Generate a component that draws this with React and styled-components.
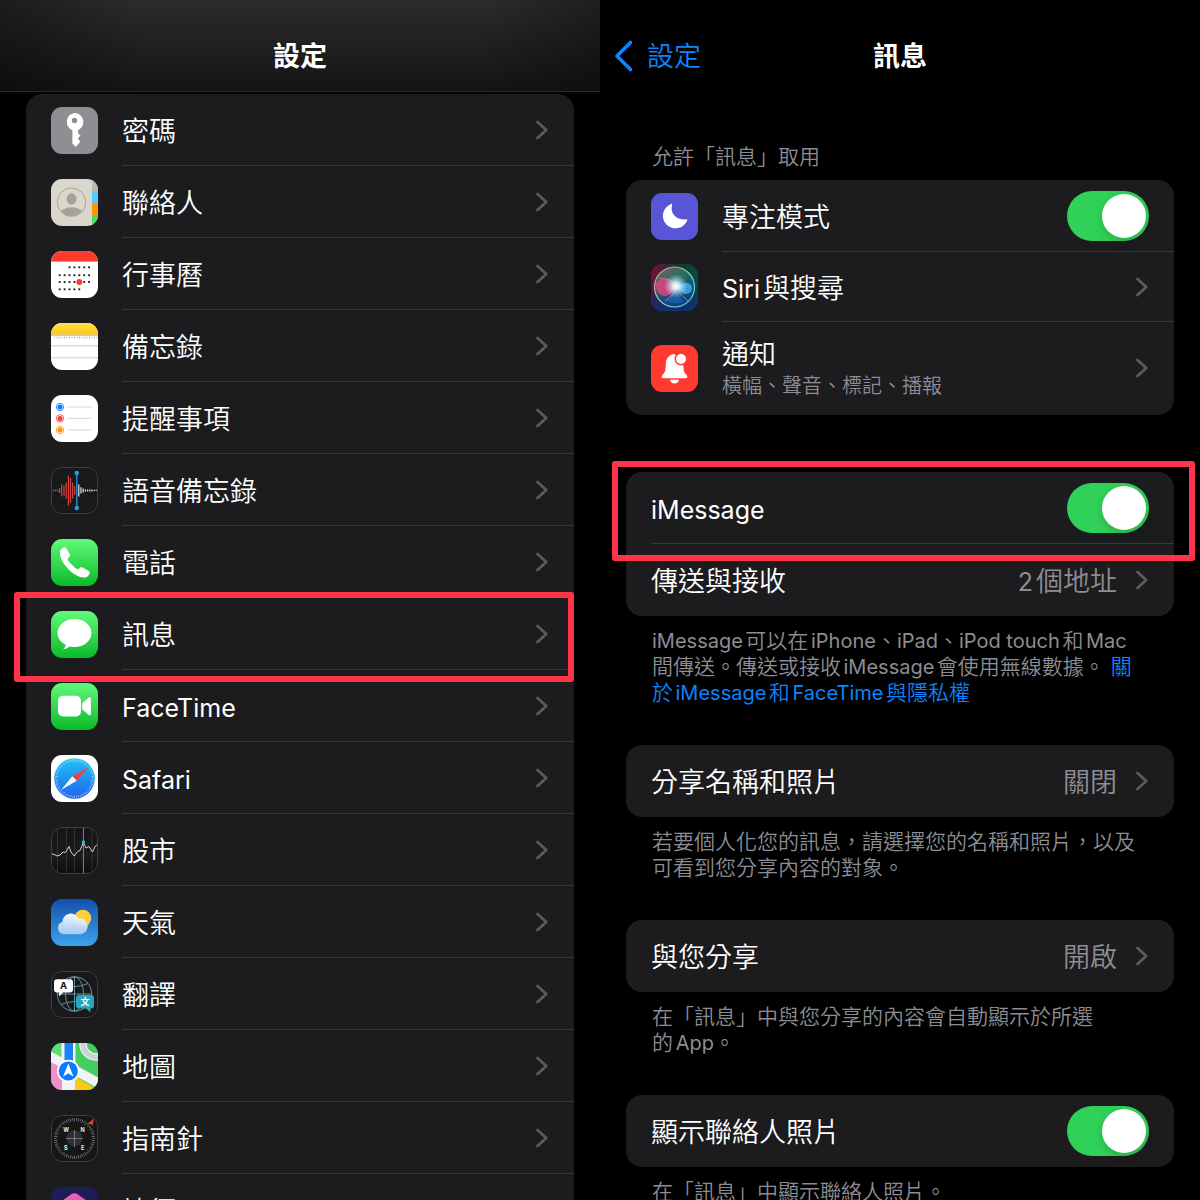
import React, { useState } from "react";
import styled, { createGlobalStyle, css } from "styled-components";

const GlobalStyle = createGlobalStyle`
  * { box-sizing: border-box; }
  body {
    margin: 0;
    background: #000;
    color: #fff;
    font-family: "Inter", "Noto Sans CJK TC", sans-serif;
    font-size: 27px;
    font-weight: 350;
    line-height: 32px;
    text-autospace: normal;
  }
  a { color: inherit; text-decoration: none; }
`;

/* ---------- layout ---------- */

const Screens = styled.div`
  display: flex;
  height: 100vh;
  overflow: hidden;
`;

const Screen = styled.main`
  flex: 1;
  min-width: 0;
`;

const NavBar = styled.header`
  display: grid;
  grid-template-columns: 1fr auto 1fr;
  align-items: center;
  height: 92px;
  padding: 22px 14px 0;
  border-bottom: 1px solid transparent;
  ${(p) =>
    p.$raised &&
    css`
      border-bottom-color: #2b2b2d;
      background:
        linear-gradient(90deg, rgba(0, 0, 0, 0.35), transparent 24%, transparent 80%, rgba(0, 0, 0, 0.3)),
        linear-gradient(#2c2c2d, #141414);
    `}
`;

const Title = styled.h1`
  grid-column: 2;
  margin: 0;
  font-size: 27px;
  font-weight: 700;
`;

const BackLink = styled.a`
  display: flex;
  align-items: center;
  gap: 13px;
  color: #0a84ff;
`;

const Content = styled.div`
  padding: ${(p) => (p.$top ? p.$top : 2)}px 26px 0;
`;

const Group = styled.section`
  margin-bottom: ${(p) => (p.$wide ? 57 : 39)}px;
`;

const GroupTitle = styled.h2`
  margin: 0;
  padding: 0 26px 10px;
  color: #8d8d93;
  font-size: 21px;
  font-weight: inherit;
  line-height: 26px;
`;

const Card = styled.div`
  border-radius: 16px;
  background: #1c1c1e;
`;

const GroupNote = styled.p`
  margin: 0;
  padding: 12px 26px 0;
  color: #8d8d93;
  font-size: 21px;
  line-height: 26px;
  white-space: nowrap;
`;

const NoteLink = styled.a`
  && { color: #0a84ff; }
`;

/* ---------- rows ---------- */

const rowStyle = css`
  position: relative;
  display: flex;
  align-items: center;
  gap: 24px;
  height: ${(p) => (p.$tall ? 93 : p.$short ? 70 : 72)}px;
  padding-left: 25px;
`;

const LinkRow = styled.a`${rowStyle}`;
const SwitchRow = styled.label`${rowStyle}`;

const RowBody = styled.span`
  display: flex;
  flex: 1;
  align-items: center;
  align-self: stretch;
  min-width: 0;
  padding: 4px 25px 0 0;
  border-bottom: 1px solid ${(p) => (p.$last ? "transparent" : "#38383a")};
`;

const Label = styled.span`
  flex: 1;
  min-width: 0;
  white-space: nowrap;
`;

const Detail = styled.span`
  display: block;
  color: #8d8d93;
  font-size: 20px;
  line-height: 30px;
`;

const Value = styled.span`
  margin-right: 18px;
  color: #8d8d93;
`;

const Latin = styled.span`
  font-size: ${(p) => (p.$small ? 20 : 25)}px;
  font-weight: 400;
`;

const Highlight = styled.span`
  position: absolute;
  z-index: 1;
  inset: ${(p) => p.$inset};
  border: 6px solid #ff344b;
  border-radius: 3px;
  pointer-events: none;
`;

const Switch = styled.input`
  appearance: none;
  flex: none;
  width: 82px;
  height: 50px;
  margin: 0 0 4px;
  padding: 3px;
  border-radius: 25px;
  background: #39393d;
  cursor: pointer;

  &::before {
    content: "";
    display: block;
    width: 44px;
    height: 44px;
    border-radius: 50%;
    background: #fff;
    box-shadow: 0 3px 8px rgba(0, 0, 0, 0.18);
  }
  &:checked { background: #30d158; }
  &:checked::before { margin-left: auto; }
`;

const ChevronSvg = styled.svg`
  flex: none;
  width: 14px;
  height: 22px;
  margin-bottom: 4px;
`;

const BackSvg = styled.svg`
  width: 20px;
  height: 32px;
  margin-bottom: 2px;
`;

const Tile = styled.svg`
  flex: none;
  width: 47px;
  height: 47px;
  border-radius: 11px;
  overflow: hidden;
`;

const Chevron = () => (
  <ChevronSvg viewBox="0 0 14 22" aria-hidden="true">
    <path d="M2.5 3l8.7 8-8.7 8" fill="none" stroke="#5c5c60" strokeWidth="2.8" strokeLinecap="round" strokeLinejoin="round" />
  </ChevronSvg>
);

/* Latin runs are set a little smaller than the Chinese text around them. */
const Mixed = ({ text, small }) =>
  text.split(/([A-Za-z0-9][A-Za-z0-9 ]*)/).map((part, i) =>
    i % 2 ? <Latin key={i} $small={small}>{part}</Latin> : part
  );

/* ---------- icons ---------- */

const Frame = () => <rect x=".5" y=".5" width="46" height="46" rx="10.5" fill="none" stroke="#3e3e41" />;

const Green = ({ id }) => (
  <>
    <linearGradient id={id} x2="0" y2="1">
      <stop stopColor="#61f97b" />
      <stop offset="1" stopColor="#0abb28" />
    </linearGradient>
    <rect width="47" height="47" fill={`url(#${id})`} />
  </>
);

const tickMarks = (count, r1, r2) =>
  Array.from({ length: count }, (_, i) => {
    const a = (i * 2 * Math.PI) / count;
    const long = i % 2 ? r1 + 1 : r1;
    return `M${23.5 + long * Math.sin(a)} ${23.5 - long * Math.cos(a)}L${23.5 + r2 * Math.sin(a)} ${23.5 - r2 * Math.cos(a)}`;
  }).join("");

const calendarDots = [
  [16.3, 2, 6],
  [24.2, 0, 6],
  [31, 0, 6],
  [38.3, 0, 4],
].flatMap(([y, from, to]) =>
  Array.from({ length: to - from + 1 }, (_, i) => [8.7 + (from + i) * 4.9, y])
);

const redBars = [[2.5, 1], [4.6, 1], [6.7, 1], [8.7, 2.5], [10.7, 6], [13, 5], [15.2, 8], [17.4, 15], [19.5, 12.5], [21.6, 8], [23.7, 4.5]];
const whiteBars = [[27.8, 6], [30, 3.2], [32.2, 2], [34.4, 1], [36.6, 1], [38.8, 1], [41, 1], [43.2, 0.7], [45.2, 0.7]];

const icons = {
  passwords: (
    <>
      <rect width="47" height="47" fill="#8e8e93" />
      <path fill="#fff" fillRule="evenodd" d="M23.5 6a9 9 0 0 1 3.6 17.2v3l2.2 2.2-2.4 3 2.4 3.3-4.500 5.300-3.400-3.500V23.200A9 9 0 0 1 23.500 6zm0 4.700a2.700 2.700 0 1 0 0 5.400 2.700 2.700 0 0 0 0-5.400z" />
    </>
  ),
  contacts: (
    <>
      <rect width="47" height="47" fill="#d9d6cc" />
      <rect x="41" width="6" height="12" fill="#b9b8b2" />
      <rect x="41" y="12" width="6" height="12" fill="#5ac8fa" />
      <rect x="41" y="24" width="6" height="12" fill="#ff9500" />
      <rect x="41" y="36" width="6" height="11" fill="#4cd964" />
      <clipPath id="face"><circle cx="20.5" cy="23.2" r="14" /></clipPath>
      <g fill="#a8a09a" clipPath="url(#face)">
        <ellipse cx="20.5" cy="20" rx="5" ry="5.8" />
        <ellipse cx="20.5" cy="36" rx="12" ry="7.7" />
      </g>
      <circle cx="20.5" cy="23.2" r="14.2" fill="none" stroke="#a8a09a" strokeWidth="1" />
    </>
  ),
  calendar: (
    <>
      <rect width="47" height="47" fill="#fff" />
      <rect width="47" height="10.6" fill="#ff3b30" />
      {calendarDots.map(([x, y]) => <rect key={`${x}-${y}`} x={x - 0.9} y={y - 0.9} width="1.8" height="1.8" fill="#111" />)}
      <circle cx="28.3" cy="31" r="3" fill="#ff3b30" />
    </>
  ),
  notes: (
    <>
      <linearGradient id="notesTop" x2="0" y2="1"><stop stopColor="#ffdf5e" /><stop offset="1" stopColor="#fdc800" /></linearGradient>
      <rect width="47" height="47" fill="#fff" />
      <rect width="47" height="11.6" fill="url(#notesTop)" />
      <path d="M0 12.2h47" stroke="#b9b5a4" />
      <path d="M3 14.5h44" stroke="#aaa" strokeWidth="1.5" strokeDasharray="1 1.5" />
      <path d="M0 22.8h47M0 34.8h47" stroke="#c4c4c6" strokeWidth=".9" />
    </>
  ),
  reminders: (
    <>
      <rect width="47" height="47" fill="#fff" />
      {[[12, "#0a7bff"], [23.4, "#ff3b30"], [35, "#ff9500"]].map(([y, c]) => (
        <g key={y}>
          <circle cx="9" cy={y} r="2.5" fill={c} />
          <circle cx="9" cy={y} r="3.7" fill="none" stroke={c} strokeWidth=".8" />
          <path d={`M17 ${y}h24`} stroke="#d2d2d4" strokeWidth=".9" />
        </g>
      ))}
    </>
  ),
  voice: (
    <>
      <rect width="47" height="47" fill="#19191b" />
      <Frame />
      {redBars.map(([x, h]) => <path key={x} d={`M${x} ${23.4 - h}v${h * 2}`} stroke="#d2433e" strokeWidth="1.2" />)}
      {whiteBars.map(([x, h]) => <path key={x} d={`M${x} ${23.4 - h}v${h * 2}`} stroke="#e6e6e6" strokeWidth="1.2" />)}
      <path d="M25.8 6v35" stroke="#1fa1ee" strokeWidth="1.2" />
      <circle cx="25.8" cy="6" r="2.2" fill="#1fa1ee" />
      <circle cx="25.8" cy="41" r="2.2" fill="#1fa1ee" />
    </>
  ),
  phone: (
    <>
      <Green id="phoneBg" />
      <path fill="#fff" d="M9 13.5C9 10.5 12 8.4 13.5 8.2c1-.1 1.6.7 2.2 1.7l3 5.1c.7 1.3.3 2.4-.7 3.3l-1.2 1.1c-.6.8.9 3.2 3.9 6.2s5.6 5 6.6 4.7l1.3-1.3c1-.9 2-1.1 3.2-.5l5.4 3.2c1.3.8 1.9 1.5 1.5 2.8-.6 1.9-2.9 4-5.1 4-4.8.3-11.1-3-16.1-8.2S8.8 18.7 9 13.5z" />
    </>
  ),
  messages: (
    <>
      <Green id="messagesBg" />
      <path fill="#fff" d="M23.5 8c9.5 0 17 6.2 17 14s-7.5 14-17 14c-1.8 0-3.5-.2-5-.6-1.5 1.5-3.6 2.5-6.3 2.7 1.6-1.2 2.4-2.7 2.4-4.3-4.9-2.5-8.1-6.8-8.1-11.8 0-7.8 7.5-14 17-14z" />
    </>
  ),
  facetime: (
    <>
      <Green id="facetimeBg" />
      <rect x="7" y="12.7" width="23" height="20.8" rx="5" fill="#fff" />
      <path fill="#fff" d="M31.2 20.2l6.3-5.500c1.200-.9 2.400-.4 2.400 1v15c0 1.500-1.300 2-2.400 1l-6.300-5.400z" />
    </>
  ),
  safari: (
    <>
      <linearGradient id="safariBg" x2="0" y2="1"><stop stopColor="#1fc5f6" /><stop offset="1" stopColor="#1f62ee" /></linearGradient>
      <rect width="47" height="47" fill="#fff" />
      <circle cx="23.5" cy="23.5" r="20.3" fill="url(#safariBg)" />
      <path d={tickMarks(60, 16.8, 19.3)} stroke="#d4ecff" strokeWidth=".6" />
      <path d="M37.5 12L21.3 21.2l4.500 4.500z" fill="#f8403a" />
      <path d="M10 35l11.300-13.800 4.500 4.500z" fill="#f4f6f8" />
    </>
  ),
  stocks: (
    <>
      <linearGradient id="stocksBg" x2="0" y2="1"><stop stopColor="#151515" /><stop offset=".6" stopColor="#1b1b1c" /><stop offset="1" stopColor="#0c0c0c" /></linearGradient>
      <rect width="47" height="47" fill="url(#stocksBg)" />
      <path d="M6.5 0v47M15.5 0v47M23.5 0v47M41 0v47" stroke="#343436" strokeWidth=".9" />
      <path d="M32.4 0v47" stroke="#3e9fc8" strokeWidth="1" />
      <path d="M0 27l3 .3 3 1.7 3-1 3-3 2.500.5 3.500-6 2 5.500 3.300 4 3.200-4.500 2.500-1 3.400-8 2.600 5.500 3-1.500 3.500 5.500 2.500-5.500 3.500-3" fill="none" stroke="#e5e5e5" strokeWidth=".9" />
      <circle cx="32.4" cy="15" r="1.7" fill="#25b5ee" />
      <Frame />
    </>
  ),
  weather: (
    <>
      <linearGradient id="sky" x2="0" y2="1"><stop stopColor="#1450ab" /><stop offset="1" stopColor="#3ba3ec" /></linearGradient>
      <linearGradient id="cloud" x2="0" y2="1"><stop stopColor="#fff" /><stop offset="1" stopColor="#a5cdf2" /></linearGradient>
      <rect width="47" height="47" fill="url(#sky)" />
      <circle cx="31.8" cy="19.2" r="8.4" fill="#fccd3c" />
      <path d="M13 35.2a6.200 6.200 0 0 1-1.600-12.100 8.400 8.400 0 0 1 16.100-3.500 7.900 7.900 0 1 1 2.500 15.600z" fill="url(#cloud)" fillOpacity=".95" />
    </>
  ),
  translate: (
    <>
      <rect width="47" height="47" fill="#19191b" />
      <g fill="none" stroke="#62949b" strokeWidth="1">
        <circle cx="23.5" cy="23" r="17.2" />
        <ellipse cx="23.5" cy="23" rx="9" ry="17.2" />
        <path d="M6.3 23h34.4M23.5 5.8v34.4M10 12.5q13.5 6 27 0M10 33.5q13.500-6 27 0" />
      </g>
      <path d="M6 8.200h13a3 3 0 0 1 3 3v7.300a3 3 0 0 1-3 3h-7l-3.800 4v-4H6a3 3 0 0 1-3-3v-7.300a3 3 0 0 1 3-3z" fill="#fff" />
      <path d="M28 24h12a3 3 0 0 1 3 3v7.500a3 3 0 0 1-3 3h-.6v4l-4.200-4H28a3 3 0 0 1-3-3V27a3 3 0 0 1 3-3z" fill="#2ba6bd" />
      <text x="12.5" y="18.4" fill="#111" fontSize="9.5" fontWeight="700" textAnchor="middle">A</text>
      <text x="34" y="34.2" fill="#fff" fontSize="9" fontWeight="700" textAnchor="middle">文</text>
      <Frame />
    </>
  ),
  maps: (
    <>
      <rect width="47" height="47" fill="#45cd62" />
      <path d="M0 0h12v17L0 9z" fill="#5fdc72" />
      <path d="M0 18l13 8v21H0z" fill="#f08fd0" />
      <path d="M22 32l25 15H22z" fill="#fccb12" />
      <path d="M0 8.500l47 26v11L0 19z" fill="#f2f2f6" />
      <path d="M10.500 0h14v22h-14zM11 26h13v21H11z" fill="#f2f2f6" />
      <path d="M13.500 0h8.500v26h-8.500z" fill="#1a82f7" />
      <circle cx="45" cy="1" r="13" fill="none" stroke="#f4f4f6" strokeWidth="7.500" />
      <circle cx="45" cy="1" r="13" fill="none" stroke="#cfd0d3" strokeWidth="5" />
      <circle cx="17.300" cy="28" r="11.300" fill="#fff" />
      <circle cx="17.300" cy="28" r="9.600" fill="#0a7aff" />
      <path d="M17.300 20.500l5.300 13.200-5.300-3.500-5.300 3.500z" fill="#fff" />
    </>
  ),
  compass: (
    <>
      <rect width="47" height="47" fill="#161617" />
      <circle cx="23.500" cy="23.500" r="8" fill="#303033" />
      <path d={tickMarks(60, 17, 20.5)} stroke="#a5a5a8" strokeWidth=".6" />
      <path d="M15 23.500h17M23.500 15v17" stroke="#77777a" strokeWidth="1" />
      <path d="M42.500 4.200l-1.200 6-1.500-1.700-2.800.2z" fill="#ff3b30" stroke="#ff3b30" strokeWidth=".6" />
      <g fill="#eee" fontSize="5.5" fontWeight="700" textAnchor="middle">
        <text x="15" y="17">W</text>
        <text x="31.700" y="17">N</text>
        <text x="14.700" y="34.500">S</text>
        <text x="31.700" y="34.500">E</text>
      </g>
      <Frame />
    </>
  ),
  shortcuts: (
    <>
      <linearGradient id="cutsPink" x2="1" y2="1"><stop stopColor="#ff6e9c" /><stop offset="1" stopColor="#c63fe0" /></linearGradient>
      <rect width="47" height="47" fill="#1d1e57" />
      <path d="M20.500 7.200q3-2 6 0l12 8.300q3 2.500 0 5L26.500 29q-3 2-6 0l-12-8.500q-3-2.500 0-5z" fill="url(#cutsPink)" />
      <path d="M9 26l12 8q2.500 1.500 5 0l12-8q3 3 0 5.500l-11.500 8q-3 2-6 0L9 31.500Q6 29 9 26z" fill="#2ec4e6" />
    </>
  ),
  focus: (
    <>
      <rect width="47" height="47" fill="#5856d6" />
      <path d="M20.200 10.900c.7-.3 1.200.2 1 .9-2.700 8.300 4.300 16 14 14.400.9-.1 1.400.5 1 1.200A12.600 12.600 0 1 1 20.200 10.900z" fill="#fff" />
    </>
  ),
  siri: (
    <>
      <linearGradient id="siriBg" x2="1" y2=".2"><stop stopColor="#7a0c3b" /><stop offset=".5" stopColor="#14342f" /><stop offset="1" stopColor="#074a3e" /></linearGradient>
      <linearGradient id="siriLow" x2="0" y2="1"><stop offset=".4" stopColor="#16235a" stopOpacity="0" /><stop offset="1" stopColor="#102f74" /></linearGradient>
      <radialGradient id="siriGlow"><stop stopColor="#fff" /><stop offset=".25" stopColor="#f2faff" stopOpacity=".9" /><stop offset="1" stopColor="#9fd8ff" stopOpacity="0" /></radialGradient>
      <linearGradient id="siriOrb" x1=".2" x2=".7" y2="1"><stop stopColor="#8e6a68" /><stop offset=".35" stopColor="#2b7d62" /><stop offset=".6" stopColor="#185a7e" /><stop offset="1" stopColor="#123d8a" /></linearGradient>
      <linearGradient id="siriRing" x2="1" y2="1"><stop stopColor="#f08a92" /><stop offset=".5" stopColor="#8fdcc0" /><stop offset="1" stopColor="#4fb8f0" /></linearGradient>
      <rect width="47" height="47" fill="url(#siriBg)" />
      <rect width="47" height="47" fill="url(#siriLow)" />
      <circle cx="23.500" cy="23" r="20" fill="url(#siriOrb)" fillOpacity=".8" stroke="url(#siriRing)" strokeWidth="1.200" />
      <path d="M26 23C20 13 8 12 5 20c-1 6 3 12 9 12 5 0 9-5 12-9z" fill="#e5417d" fillOpacity=".85" />
      <path d="M25 23c4-4 11-6 15-2 3 5-1 9-5 9-4 0-6-4-10-7z" fill="#37aeea" fillOpacity=".85" />
      <path d="M25 23q-3 9-11 13 8 5 19 2-6-7-8-15z" fill="#1c6ac6" fillOpacity=".6" />
      <path d="M8 14q14 0 18 10 4 8 11 13M14 37q10-7 12-14" fill="none" stroke="#d9a2bd" strokeOpacity=".6" strokeWidth=".9" />
      <circle cx="25" cy="22" r="12" fill="url(#siriGlow)" />
    </>
  ),
  notifications: (
    <>
      <rect width="47" height="47" fill="#ff3b30" />
      <path d="M23.500 9c-5.300.4-8.200 4.300-8.600 9.300l-.5 6.200c-.2 2.100-1.100 3.300-2.800 5.200-1.800 2-.8 3.500 1.300 3.500h21.200c2.100 0 3.100-1.500 1.300-3.500-1.700-1.900-2.600-3.100-2.800-5.200l-.4-6z" fill="#fff" />
      <path d="M19 34.700h9c-.4 2.500-2.200 3.700-4.500 3.700s-4.100-1.200-4.500-3.700z" fill="#fff" />
      <circle cx="30" cy="14" r="6.500" fill="#ff3b30" />
      <circle cx="30" cy="14" r="5" fill="#fff" />
    </>
  ),
};

const AppIcon = ({ name }) => <Tile viewBox="0 0 47 47" aria-hidden="true">{icons[name]}</Tile>;

/* ---------- row components ---------- */

const DisclosureRow = ({ icon, label, detail, value, last, tall, short, highlight }) => (
  <LinkRow href="#" $tall={tall} $short={short}>
    {icon && <AppIcon name={icon} />}
    <RowBody $last={last}>
      <Label>
        <Mixed text={label} />
        {detail && <Detail>{detail}</Detail>}
      </Label>
      {value && <Value><Mixed text={value} /></Value>}
      <Chevron />
    </RowBody>
    {highlight && <Highlight $inset={highlight} />}
  </LinkRow>
);

const ToggleRow = ({ icon, label, last, highlight }) => {
  const [on, setOn] = useState(true);
  return (
    <SwitchRow>
      {icon && <AppIcon name={icon} />}
      <RowBody $last={last}>
        <Label><Mixed text={label} /></Label>
        <Switch type="checkbox" role="switch" checked={on} onChange={(e) => setOn(e.target.checked)} />
      </RowBody>
      {highlight && <Highlight $inset={highlight} />}
    </SwitchRow>
  );
};

const apps = [
  ["passwords", "密碼"],
  ["contacts", "聯絡人"],
  ["calendar", "行事曆"],
  ["notes", "備忘錄"],
  ["reminders", "提醒事項"],
  ["voice", "語音備忘錄"],
  ["phone", "電話"],
  ["messages", "訊息", "-6px 0 -12px -12px"],
  ["facetime", "FaceTime"],
  ["safari", "Safari"],
  ["stocks", "股市"],
  ["weather", "天氣"],
  ["translate", "翻譯"],
  ["maps", "地圖"],
  ["compass", "指南針"],
  ["shortcuts", "捷徑"],
];

export default function App() {
  return (
    <>
      <GlobalStyle />
      <Screens lang="zh-Hant">
        <Screen>
          <NavBar $raised>
            <Title>設定</Title>
          </NavBar>
          <Content>
            <Card>
              {apps.map(([icon, label, highlight]) => (
                <DisclosureRow key={icon} icon={icon} label={label} highlight={highlight} />
              ))}
            </Card>
          </Content>
        </Screen>

        <Screen>
          <NavBar>
            <BackLink href="#">
              <BackSvg viewBox="0 0 20 32" aria-hidden="true">
                <path d="M16.500 2.500L3 16l13.500 13.500" fill="none" stroke="currentColor" strokeWidth="3.600" strokeLinecap="round" strokeLinejoin="round" />
              </BackSvg>
              設定
            </BackLink>
            <Title>訊息</Title>
          </NavBar>
          <Content $top={52}>
            <Group $wide>
              <GroupTitle>允許「訊息」取用</GroupTitle>
              <Card>
                <ToggleRow icon="focus" label="專注模式" />
                <DisclosureRow icon="siri" label="Siri與搜尋" short />
                <DisclosureRow icon="notifications" label="通知" detail="橫幅、聲音、標記、播報" tall last />
              </Card>
            </Group>

            <Group>
              <Card>
                <ToggleRow label="iMessage" highlight="-11px -21px -17px -14px" />
                <DisclosureRow label="傳送與接收" value="2個地址" last />
              </Card>
              <GroupNote>
                <Mixed small text="iMessage可以在iPhone、iPad、iPod touch和Mac" />
                <br />
                <Mixed small text="間傳送。傳送或接收iMessage會使用無線數據。 " />
                <NoteLink href="#">
                  關<br />
                  <Mixed small text="於iMessage和FaceTime與隱私權" />
                </NoteLink>
              </GroupNote>
            </Group>

            <Group>
              <Card>
                <DisclosureRow label="分享名稱和照片" value="關閉" last />
              </Card>
              <GroupNote>
                若要個人化您的訊息，請選擇您的名稱和照片，以及
                <br />
                可看到您分享內容的對象。
              </GroupNote>
            </Group>

            <Group>
              <Card>
                <DisclosureRow label="與您分享" value="開啟" last />
              </Card>
              <GroupNote>
                在「訊息」中與您分享的內容會自動顯示於所選
                <br />
                <Mixed small text="的App。" />
              </GroupNote>
            </Group>

            <Group>
              <Card>
                <ToggleRow label="顯示聯絡人照片" last />
              </Card>
              <GroupNote>在「訊息」中顯示聯絡人照片。</GroupNote>
            </Group>
          </Content>
        </Screen>
      </Screens>
    </>
  );
}
